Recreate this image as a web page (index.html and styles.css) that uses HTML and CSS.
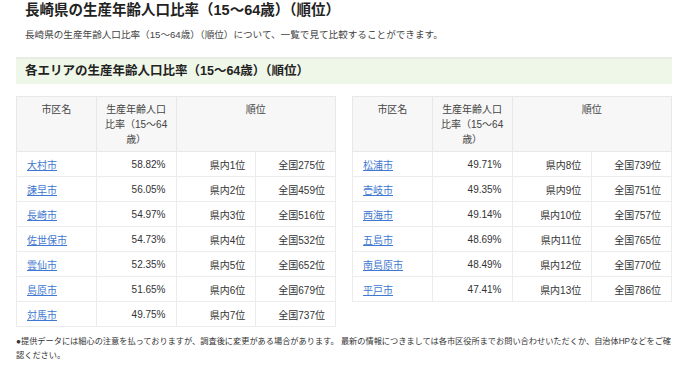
FILE: index.html
```html
<!DOCTYPE html>
<html lang="ja">
<head>
<meta charset="utf-8">
<link rel="stylesheet" href="styles.css">
</head>
<body>
<div class="page">
  <h1 class="title">長崎県の生産年齢人口比率（15〜64歳）（順位）</h1>
  <p class="lead">長崎県の生産年齢人口比率（15〜64歳）（順位）について、一覧で見て比較することができます。</p>
  <h2 class="section">各エリアの生産年齢人口比率（15〜64歳）（順位）</h2>
  <div class="tables">
    <table class="rank">
      <thead>
        <tr><th>市区名</th><th>生産年齢人口比率（15〜64歳）</th><th colspan="2">順位</th></tr>
      </thead>
      <tbody>
        <tr><td class="name"><a href="#">大村市</a></td><td class="num">58.82%</td><td class="num">県内1位</td><td class="num">全国275位</td></tr>
        <tr><td class="name"><a href="#">諫早市</a></td><td class="num">56.05%</td><td class="num">県内2位</td><td class="num">全国459位</td></tr>
        <tr><td class="name"><a href="#">長崎市</a></td><td class="num">54.97%</td><td class="num">県内3位</td><td class="num">全国516位</td></tr>
        <tr><td class="name"><a href="#">佐世保市</a></td><td class="num">54.73%</td><td class="num">県内4位</td><td class="num">全国532位</td></tr>
        <tr><td class="name"><a href="#">雲仙市</a></td><td class="num">52.35%</td><td class="num">県内5位</td><td class="num">全国652位</td></tr>
        <tr><td class="name"><a href="#">島原市</a></td><td class="num">51.65%</td><td class="num">県内6位</td><td class="num">全国679位</td></tr>
        <tr><td class="name"><a href="#">対馬市</a></td><td class="num">49.75%</td><td class="num">県内7位</td><td class="num">全国737位</td></tr>
      </tbody>
    </table>
    <table class="rank">
      <thead>
        <tr><th>市区名</th><th>生産年齢人口比率（15〜64歳）</th><th colspan="2">順位</th></tr>
      </thead>
      <tbody>
        <tr><td class="name"><a href="#">松浦市</a></td><td class="num">49.71%</td><td class="num">県内8位</td><td class="num">全国739位</td></tr>
        <tr><td class="name"><a href="#">壱岐市</a></td><td class="num">49.35%</td><td class="num">県内9位</td><td class="num">全国751位</td></tr>
        <tr><td class="name"><a href="#">西海市</a></td><td class="num">49.14%</td><td class="num">県内10位</td><td class="num">全国757位</td></tr>
        <tr><td class="name"><a href="#">五島市</a></td><td class="num">48.69%</td><td class="num">県内11位</td><td class="num">全国765位</td></tr>
        <tr><td class="name"><a href="#">南島原市</a></td><td class="num">48.49%</td><td class="num">県内12位</td><td class="num">全国770位</td></tr>
        <tr><td class="name"><a href="#">平戸市</a></td><td class="num">47.41%</td><td class="num">県内13位</td><td class="num">全国786位</td></tr>
      </tbody>
    </table>
  </div>
  <p class="note">●提供データには細心の注意を払っておりますが、調査後に変更がある場合があります。 最新の情報につきましては各市区役所までお問い合わせいただくか、自治体HPなどをご確認ください。</p>
</div>
</body>
</html>
```
FILE: styles.css
```css
html, body {
  margin: 0;
  padding: 0;
  background: #fff;
}
body {
  font-family: "Liberation Sans", "Noto Sans CJK JP", sans-serif;
  color: #333;
}
.page {
  padding: 0 8px 0 16px;
}
.title {
  margin: 0;
  padding-left: 9px;
  font-size: 14.5px;
  line-height: 20px;
  font-weight: bold;
  color: #222;
}
.lead {
  margin: 8px 0 0;
  padding-left: 9px;
  font-size: 9.6px;
  line-height: 14px;
  color: #444;
}
.section {
  margin: 15px 0 0;
  padding: 0 9px;
  height: 25px;
  line-height: 25px;
  font-size: 12.5px;
  font-weight: bold;
  color: #222;
  background: #eff7e8;
  border-top: 2px solid #e8ece6;
}
.tables {
  display: flex;
  gap: 16px;
  margin-top: 12px;
  align-items: flex-start;
}
.rank {
  width: 320px;
  border-collapse: collapse;
  table-layout: fixed;
  font-size: 10px;
  border: 1px solid #e8e8e8;
}
.rank th {
  background: #f7f7f7;
  font-weight: normal;
  vertical-align: top;
  text-align: center;
  padding: 5px 7px 4px;
  line-height: 15px;
  height: 45px;
  border: 1px solid #e8e8e8;
  color: #444;
}
.rank td {
  height: 24px;
  padding: 0 10px;
  border: 1px solid #ececec;
  color: #333;
}
.rank td.num {
  text-align: right;
}
.rank td.name a {
  color: #3f78d0;
  text-decoration: underline;
}
.note {
  margin: 8px 0 0;
  font-size: 8.2px;
  line-height: 14px;
  color: #333;
}
```
